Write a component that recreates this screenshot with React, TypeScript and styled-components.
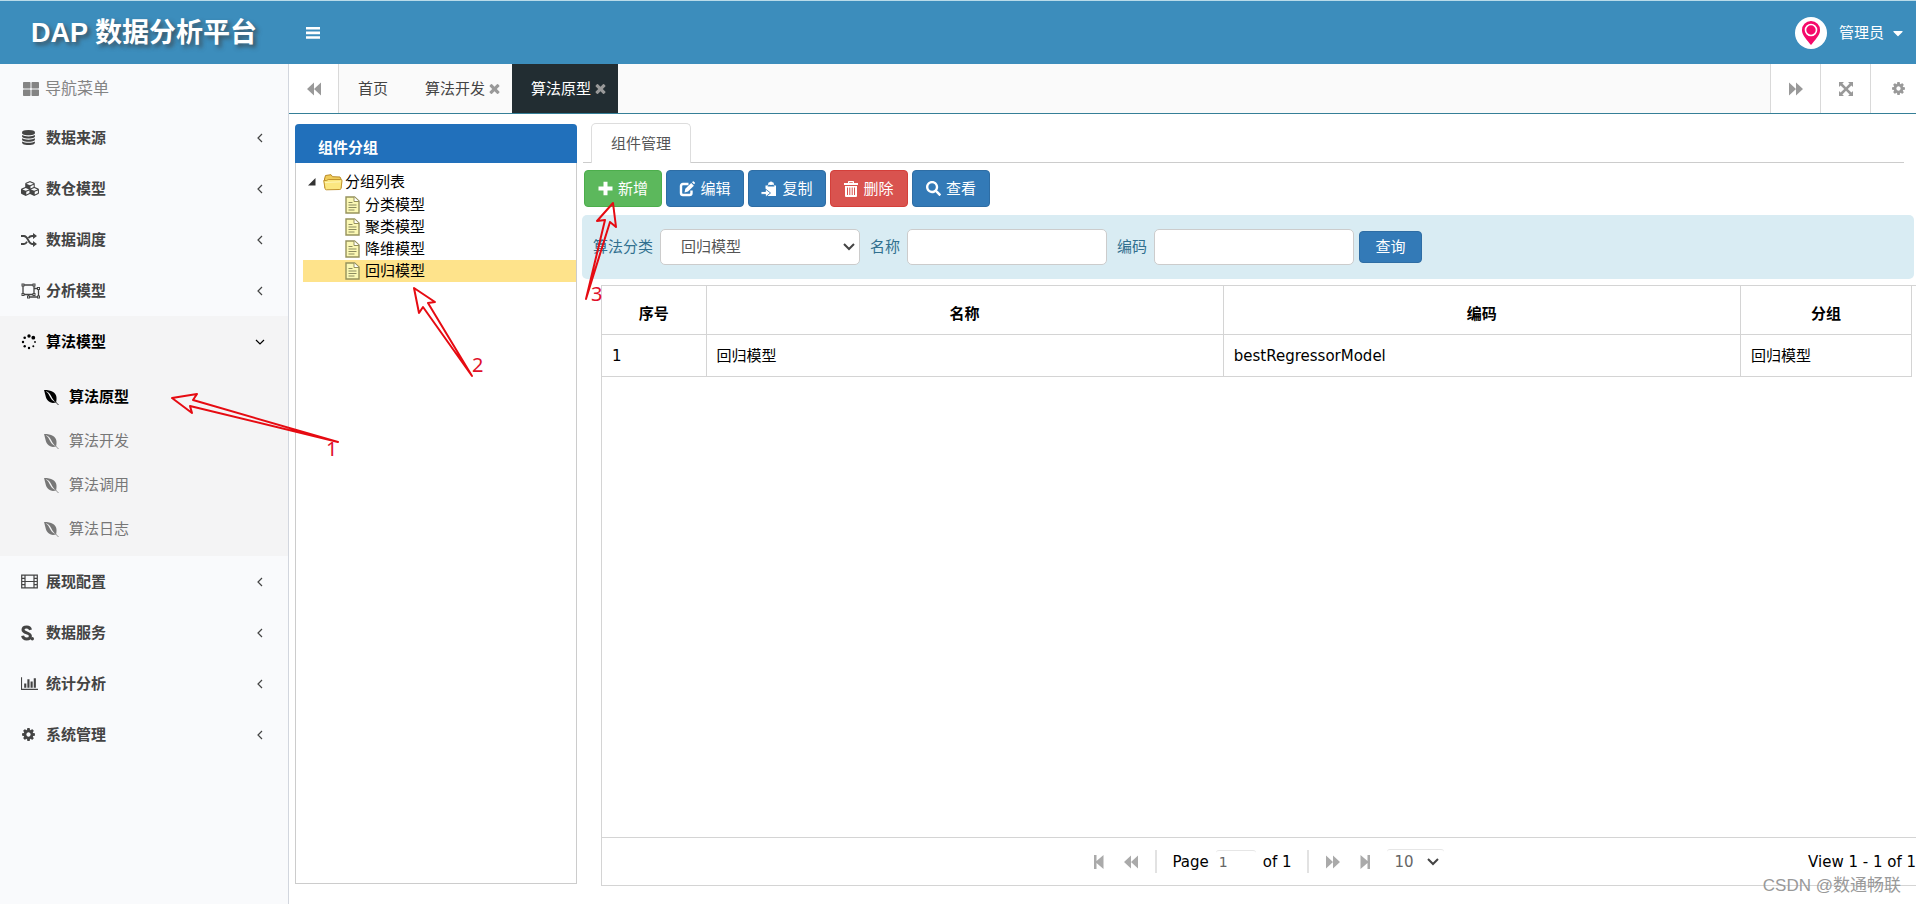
import React from "react";
import styled, { createGlobalStyle, css } from "styled-components";
import { FaThLarge, FaSearch, FaEnvira, FaCaretDown } from "react-icons/fa";

const GlobalStyle = createGlobalStyle`
  * { box-sizing: border-box; }
  body {
    margin: 0;
    background: #fff;
    font-family: "DejaVu Sans", "Noto Sans CJK SC", sans-serif;
    font-size: 15px;
    line-height: 20px;
    color: #000;
  }
  button, input, select { font: inherit; }
  a { color: inherit; text-decoration: none; }
  ul { list-style: none; margin: 0; padding: 0; }
`;

/* ---------- Icons ---------- */

const Svg = styled.svg<{ $w: number; $h?: number }>`
  display: block;
  flex: none;
  width: ${(p) => p.$w}px;
  height: ${(p) => p.$h ?? p.$w}px;
  fill: currentColor;
`;

const MenuIcon = () => (
  <Svg $w={14} $h={12} viewBox="0 0 14 12">
    <path d="M0 0h14v2.600H0zM0 4.600h14v2.600H0zM0 9.200h14v2.600H0z" />
  </Svg>
);

const DatabaseIcon = () => (
  <Svg $w={15} viewBox="0 0 1792 1792">
    <path d="M896 768q237 0 443-43t325-127v170q0 69-103 128t-280 93.500-385 34.500-385-34.500-280-93.500-103-128v-170q119 84 325 127t443 43zm0 768q237 0 443-43t325-127v170q0 69-103 128t-280 93.500-385 34.500-385-34.500-280-93.500-103-128v-170q119 84 325 127t443 43zm0-384q237 0 443-43t325-127v170q0 69-103 128t-280 93.500-385 34.500-385-34.500-280-93.500-103-128v-170q119 84 325 127t443 43zm0-1152q208 0 385 34.500t280 93.500 103 128v128q0 69-103 128t-280 93.500-385 34.500-385-34.500-280-93.500-103-128v-128q0-69 103-128t280-93.500 385-34.500z" />
  </Svg>
);

const CubesIcon = () => (
  <Svg $w={19} $h={15} viewBox="0 0 2304 1792">
    <path d="M640 1632l384-192v-314l-384 164v342zm-64-454l404-173-404-173-404 173zm1088 454l384-192v-314l-384 164v342zm-64-454l404-173-404-173-404 173zm-448-293l384-165v-266l-384 164v267zm-64-379l441-189-441-189-441 189zm1088 518v416q0 36-19 67t-52 47l-448 224q-25 14-57 14t-57-14l-448-224q-4-2-7-4-2 2-7 4l-448 224q-25 14-57 14t-57-14l-448-224q-33-16-52-47t-19-67v-416q0-38 21.500-70t56.500-48l434-186v-400q0-38 21.500-70t56.500-48l448-192q23-10 50-10t50 10l448 192q35 16 56.500 48t21.500 70v400l434 186q36 16 57 48t21 70z" />
  </Svg>
);

const ShuffleIcon = () => (
  <Svg $w={16} $h={14} viewBox="0 0 16 14">
    <path d="M0 3h3c4.500 0 4 8 8 8h1.500M0 11h3c1.500 0 2.300-1 3-2.400M7.500 5C8.300 3.800 9.300 3 11 3h1.500" fill="none" stroke="currentColor" strokeWidth="1.900" />
    <path d="M12 0l4 3-4 3zM12 8l4 3-4 3z" />
  </Svg>
);

const ObjectGroupIcon = () => (
  <Svg $w={19} $h={16} viewBox="0 0 19 16">
    <path d="M2 2h11v9.500H2zM13 5.500h4.500v8.500H7.500v-2.500" fill="none" stroke="currentColor" strokeWidth="1.300" />
    <path d="M.5.500h3v3h-3zM11.500.500h3v3h-3zM.5 10h3v3h-3zM11.500 10h3v3h-3zM16 4h3v3h-3zM16 12.500h3v3h-3zM6 12.500h3v3H6z" />
    <path d="M1.500 1.500h1v1h-1zM12.500 1.500h1v1h-1zM1.500 11h1v1h-1zM12.500 11h1v1h-1zM17 5h1v1h-1zM17 13.500h1v1h-1zM7 13.500h1v1H7z" fill="#f9fafc" />
  </Svg>
);

const SpinnerIcon = () => (
  <Svg $w={16} viewBox="0 0 16 16">
    <circle cx="8" cy="2" r="1.700" />
    <circle cx="12.300" cy="3.700" r="1.900" />
    <circle cx="14" cy="8" r="0.900" />
    <circle cx="12.300" cy="12.300" r="1" />
    <circle cx="8" cy="14" r="1.200" />
    <circle cx="3.700" cy="12.300" r="1.200" />
    <circle cx="2" cy="8" r="1.200" />
    <circle cx="3.700" cy="3.700" r="1.300" />
  </Svg>
);

const FilmIcon = () => (
  <Svg $w={17} $h={15} viewBox="0 0 17 15">
    <path d="M.7 1.200h15.600v12.600H.7zM4 1.200v12.600M13 1.200v12.600M4 7.500h9M.7 4.300H4M.7 7.500H4M.7 10.700H4M13 4.300h3.300M13 7.500h3.300M13 10.700h3.300" fill="none" stroke="currentColor" strokeWidth="1.200" />
  </Svg>
);

const ServiceIcon = () => (
  <Svg $w={14} $h={16} viewBox="0 0 14 16">
    <path d="M9.500 4.800C9 2.600 7.500 2 5.800 2 3.500 2 2 3.200 2 4.800c0 3.700 7.400 2.500 7.400 6.200 0 1.900-1.700 3-3.800 3-2.200 0-3.600-1-4-3.200" fill="none" stroke="currentColor" strokeWidth="3" />
    <circle cx="11.300" cy="13.800" r="1.700" />
  </Svg>
);

const BarsChartIcon = () => (
  <Svg $w={17} $h={15} viewBox="0 0 2048 1792">
    <path d="M640 896v512h-256v-512h256zm384-512v1024h-256v-1024h256zm1024 1152v128h-2048v-1536h128v1408h1920zm-640-896v768h-256v-768h256zm384-384v1152h-256v-1152h256z" />
  </Svg>
);

const GearIcon = () => (
  <Svg $w={15} viewBox="0 0 1792 1792">
    <path d="M1152 896q0-106-75-181t-181-75-181 75-75 181 75 181 181 75 181-75 75-181zm512-109v222q0 12-8 23t-20 13l-185 28q-19 54-39 91 35 50 107 138 10 12 10 25t-9 23q-27 37-99 108t-94 71q-12 0-26-9l-138-108q-44 23-91 38-16 136-29 186-7 28-36 28h-222q-14 0-24.500-8.500t-11.500-21.500l-28-184q-49-16-90-37l-141 107q-10 9-25 9-14 0-25-11-126-114-165-168-7-10-7-23 0-12 8-23 15-21 51-66.500t54-70.500q-27-50-41-99l-183-27q-13-2-21-12.500t-8-23.500v-222q0-12 8-23t19-13l186-28q14-46 39-92-40-57-107-138-10-12-10-24 0-10 9-23 26-36 98.500-107.500t94.500-71.500q13 0 26 10l138 107q44-23 91-38 16-136 29-186 7-28 36-28h222q14 0 24.500 8.500t11.500 21.500l28 184q49 16 90 37l142-107q9-9 24-9 13 0 25 10 129 119 165 170 7 8 7 22 0 12-8 23-15 21-51 66.500t-54 70.500q26 50 41 98l183 28q13 2 21 12.500t8 23.500z" />
  </Svg>
);

const CloseIcon = () => (
  <Svg $w={11} viewBox="240 240 1310 1310">
    <path d="M1490 1322q0 40-28 68l-136 136q-28 28-68 28t-68-28l-294-294-294 294q-28 28-68 28t-68-28l-136-136q-28-28-28-68t28-68l294-294-294-294q-28-28-28-68t28-68l136-136q28-28 68-28t68 28l294 294 294-294q28-28 68-28t68 28l136 136q28 28 28 68t-28 68l-294 294 294 294q28 28 28 68z" />
  </Svg>
);

const DoubleArrowIcon = ({ back }: { back?: boolean }) => (
  <Svg $w={14} viewBox="0 0 14 14">
    <path d={back ? "M7 .5v13L0 7zM14 .5v13L7 7z" : "M0 .5v13L7 7zM7 .5v13L14 7z"} />
  </Svg>
);

const EdgeArrowIcon = ({ back }: { back?: boolean }) => (
  <Svg $w={10} $h={14} viewBox="0 0 10 14">
    <path d={back ? "M0 0h2.500v6L9.500 0v14l-7-6v6H0z" : "M10 0H7.500v6L.5 0v14l7-6v6H10z"} />
  </Svg>
);

const ExpandIcon = () => (
  <Svg $w={14} viewBox="0 0 14 14">
    <path d="M0 0h5L3.400 1.600 7 5.200l3.600-3.600L9 0h5v5l-1.600-1.600L8.800 7l3.600 3.600L14 9v5H9l1.600-1.600L7 8.800l-3.600 3.600L5 14H0V9l1.600 1.600L5.200 7 1.600 3.400 0 5z" />
  </Svg>
);

const ChevronIcon = ({ down }: { down?: boolean }) => (
  <Svg $w={10} viewBox="0 0 10 10">
    <path d={down ? "M1 3l4 4 4-4" : "M7 1L3 5l4 4"} fill="none" stroke="currentColor" strokeWidth="1.200" />
  </Svg>
);

const PlusIcon = () => (
  <Svg $w={15} viewBox="0 0 15 15">
    <path d="M5.500.800h4v4.700H14.500v4H9.500v4.700h-4V9.500H.5v-4h5z" />
  </Svg>
);

const EditIcon = () => (
  <Svg $w={16} viewBox="0 0 16 16">
    <path d="M9.500 3H4Q2 3 2 5v7q0 2 2 2h6.500q2 0 2-2V9.500" fill="none" stroke="currentColor" strokeWidth="2.400" />
    <path d="M5.500 11.500l.8-3.700L12.200 2l2.700 2.700L9 10.600zM13 1.200l.8-.8q.5-.4 1 0l1 1q.4.500 0 1l-.8.800z" />
  </Svg>
);

const PasteIcon = () => (
  <Svg $w={16} viewBox="0 0 16 16">
    <path d="M4.500 4.500h2.300l.7-3h5l.7 3H15V15H4.500z" />
    <path d="M6.500 5.500h7l-1-1.800h-5z" fill="#337ab7" />
    <circle cx="10" cy="2.200" r="1.800" />
    <path d="M0 10.500h4.500V8l5 4-5 4v-2.600H0z" stroke="#337ab7" strokeWidth="0.900" />
  </Svg>
);

const TrashIcon = () => (
  <Svg $w={14} $h={16} viewBox="0 0 14 16">
    <path d="M0 2h4V.8Q4 0 4.800 0h4.400q.8 0 .8.800V2h4v2H0zM5.200 1.200V2h3.600v-.8zM1 5h12v10q0 1-1 1H2q-1 0-1-1zM3 6.500V14h1V6.500zM5.300 6.500V14h1V6.500zM7.700 6.500V14h1V6.500zM10 6.500V14h1V6.500z" fillRule="evenodd" />
  </Svg>
);

const FolderIcon = () => (
  <Svg $w={20} $h={17} viewBox="0 0 20 17">
    <path d="M1.500 5l1-3.500L8 .7l1.500 2L17 3l1 2v9H2z" fill="#f0cc5a" stroke="#b98a25" />
    <path d="M.7 6.500h3l1.500-1h12.600q1.300 0 1.200 1.300L18 14.500q-.2 1-1.200 1l-13.500.3q-1 0-1.200-1z" fill="#fbe780" stroke="#c1932c" />
    <path d="M2 8.500l15.500-.7" stroke="#fff6b8" />
  </Svg>
);

const DocIcon = () => (
  <Svg $w={15} $h={18} viewBox="0 0 15 18">
    <path d="M1 1h8.500L14 5v12H1z" fill="#fbf8b4" stroke="#96925c" strokeWidth="1.400" />
    <path d="M9 1v4.500h5" fill="#fff" stroke="#96925c" />
    <path d="M3.500 6.500h4M3.500 9h8M3.500 11.500h8M3.500 14h6" stroke="#8c8c60" strokeWidth="1.200" />
  </Svg>
);

const TreeToggleIcon = () => (
  <Svg $w={8} viewBox="0 0 8 8">
    <path d="M7.500 0v7.500H0z" fill="#333" />
  </Svg>
);

const PinIcon = () => (
  <Svg $w={20} $h={24} viewBox="0 0 20 24">
    <path d="M10 0a9 9 0 0 1 9 9.500C19 14 14 19 10 24 6 19 1 14 1 9.500A9 9 0 0 1 10 0z" fill="#f5096a" />
    <circle cx="10" cy="9" r="5.500" fill="none" stroke="#fff" strokeWidth="1.600" />
  </Svg>
);

/* ---------- Header ---------- */

const Header = styled.header`
  display: flex;
  align-items: center;
  height: 64px;
  padding: 0 10px 0 31px;
  background: #3c8dbc;
  border-top: 1px solid #b9dbe9;
  color: #fff;
`;

const Brand = styled.h1`
  width: 275px;
  margin: 0;
  font: bold 27px/32px "Liberation Sans", "Noto Sans CJK SC", sans-serif;
  text-shadow: 3px 3px 4px rgba(60, 60, 60, 0.7);
`;

const PlainButton = styled.button`
  display: flex;
  align-items: center;
  padding: 0;
  border: 0;
  background: none;
  color: inherit;
`;

const UserMenu = styled(PlainButton)`
  gap: 6px;
  margin-left: auto;
`;

const Avatar = styled.span`
  display: grid;
  place-items: center;
  width: 32px;
  height: 32px;
  margin-right: 6px;
  border-radius: 50%;
  background: #fff;
`;

/* ---------- Sidebar ---------- */

const Body = styled.div`
  flex: 1;
  display: flex;
`;

const Sidebar = styled.nav`
  flex: none;
  width: 289px;
  background: #f9fafc;
  border-right: 1px solid #d2d6de;
  color: #444;
`;

const SideTitle = styled.div`
  display: flex;
  align-items: center;
  gap: 6px;
  height: 48px;
  padding: 2px 0 0 23px;
  font-size: 16px;
  color: #848484;
`;

const SideLink = styled.a<{ $open?: boolean }>`
  display: flex;
  align-items: center;
  height: 51px;
  padding: 0 23px 0 21px;
  font-weight: bold;
  ${(p) => p.$open && css`background: #f4f4f5; color: #000;`}
`;

const SideIcon = styled.span`
  display: flex;
  width: 25px;
`;

const SideLabel = styled.span`
  flex: 1;
`;

const SubList = styled.ul`
  padding: 8px 0 5px;
  background: #f4f4f5;
`;

const SubLink = styled.a<{ $active?: boolean }>`
  display: flex;
  align-items: center;
  gap: 9px;
  height: 44px;
  padding-left: 43px;
  color: ${(p) => (p.$active ? "#000" : "#777")};
  font-weight: ${(p) => (p.$active ? "bold" : "normal")};
`;

/* ---------- Page tabs ---------- */

const Main = styled.main`
  flex: 1;
  min-width: 0;
  display: flex;
  flex-direction: column;
  overflow: hidden;
`;

const TabStrip = styled.div`
  display: flex;
  height: 50px;
  background: #fafafa;
  border-bottom: 1px solid #357f97;
`;

const StripButton = styled.button<{ $side: "left" | "right" }>`
  display: grid;
  place-items: center;
  flex: none;
  width: 50px;
  padding: 0;
  border: 0 solid #d9d9d9;
  border-${(p) => (p.$side === "left" ? "right" : "left")}-width: 1px;
  background: #fff;
  color: #999;
`;

const StripEnd = styled.div`
  display: flex;
  margin: 0 -4px 0 auto;
  ${StripButton}:last-child { padding-left: 6px; }
`;

const PageTab = styled.div<{ $active?: boolean; $fixed?: boolean }>`
  display: flex;
  align-items: center;
  gap: 4px;
  padding: 0 ${(p) => (p.$fixed ? 18 : 12)}px 0 19px;
  background: ${(p) => (p.$active ? "#222d32" : "transparent")};
  color: ${(p) => (p.$active ? "#fff" : "#444")};
`;

const TabClose = styled(PlainButton)`
  color: #999;
`;

/* ---------- Workspace ---------- */

const Workspace = styled.div`
  flex: 1;
  display: flex;
  gap: 5px;
  padding: 10px 0 20px 6px;
`;

const GroupPanel = styled.section`
  flex: none;
  width: 282px;
  border: 1px solid #ccc;
  border-top: 0;
  border-radius: 4px 4px 0 0;
`;

const GroupTitle = styled.h2`
  margin: 0 -1px;
  padding: 14px 23px 5px;
  border-radius: 4px 4px 0 0;
  background: #2170bb;
  color: #fff;
  font-size: 15px;
  line-height: 20px;
`;

const Tree = styled.ul`
  padding: 6px 0 0 7px;
`;

const TreeRow = styled.li<{ $child?: boolean; $selected?: boolean }>`
  display: flex;
  align-items: center;
  gap: ${(p) => (p.$child ? 5 : 2)}px;
  height: ${(p) => (p.$child ? 22 : 24)}px;
  margin-top: ${(p) => (p.$child ? 0 : 1)}px;
  padding-left: ${(p) => (p.$child ? 42 : 5)}px;
  background: ${(p) => (p.$selected ? "#fee38b" : "transparent")};
`;

const TreeToggle = styled(PlainButton)`
  width: 13px;
`;

const Content = styled.section`
  flex: 1;
  min-width: 0;
  display: flex;
  flex-direction: column;
`;

const ContentTabs = styled.div`
  display: flex;
  margin: 0 12px 0 1px;
  padding-left: 8px;
  border-bottom: 1px solid #ccc;
`;

const ContentTab = styled.button`
  height: 40px;
  margin: -1px 0 -1px;
  padding: 1px 19px 0;
  border: 1px solid #ddd;
  border-bottom: 0;
  border-radius: 5px 5px 0 0;
  background: #fff;
  color: #555;
`;

const Toolbar = styled.div`
  display: flex;
  gap: 4px;
  padding: 7px 2px 8px;
`;

const tones = {
  green: ["#5cb85c", "#4cae4c"],
  blue: ["#337ab7", "#2e6da4"],
  red: ["#d9534f", "#d43f3a"],
};

const ActionButton = styled.button<{ $tone: keyof typeof tones; $small?: boolean }>`
  display: flex;
  align-items: center;
  justify-content: center;
  gap: 5px;
  height: ${(p) => (p.$small ? 32 : 37)}px;
  width: ${(p) => (p.$small ? 63 : 78)}px;
  padding: 0;
  border: 1px solid ${(p) => tones[p.$tone][1]};
  border-radius: 4px;
  background: ${(p) => tones[p.$tone][0]};
  color: #fff;
`;

const FilterBar = styled.form`
  display: flex;
  align-items: center;
  height: 64px;
  margin-right: 2px;
  padding-left: 11px;
  border-radius: 5px;
  background: #d9ecf3;
  color: #31708f;
`;

const Field = styled.label`
  display: flex;
  align-items: center;
  gap: 7px;
  margin-right: 10px;
  &:last-of-type { margin-right: 5px; }
`;

const SelectBox = styled.span`
  position: relative;
  color: #444;
`;

const boxStyle = css`
  display: block;
  width: 200px;
  height: 36px;
  border: 1px solid #ccc;
  border-radius: 5px;
  background: #fff;
  color: #555;
`;

const Select = styled.select`
  ${boxStyle}
  appearance: none;
  padding: 0 20px;
`;

const TextBox = styled.input`
  ${boxStyle}
  padding: 0 12px;
`;

const SelectArrow = styled.svg`
  position: absolute;
  top: 50%;
  right: 5px;
  width: 12px;
  height: 8px;
  margin-top: -4px;
  fill: none;
  stroke: currentColor;
  stroke-width: 2;
  pointer-events: none;
`;

/* ---------- Grid ---------- */

const Grid = styled.div`
  flex: 1;
  display: flex;
  flex-direction: column;
  margin: 6px 0 -2px 19px;
  border: 1px solid #d4d4d4;
  border-right: 0;
`;

const Table = styled.table`
  width: calc(100% - 4px);
  table-layout: fixed;
  border-collapse: collapse;
  th, td {
    border: 1px solid #d4d4d4;
    border-width: 0 1px 1px 0;
    padding: 2px 10px 0;
  }
  th { height: 48px; padding-top: 8px; }
  td { height: 42px; }
`;

const IndexCol = styled.col`
  width: 104px;
`;

const GroupCol = styled.col`
  width: 171px;
`;

const Pager = styled.div`
  display: grid;
  grid-template-columns: 1fr auto 1fr;
  align-items: center;
  height: 48px;
  margin-top: auto;
  padding-left: 10px;
  border-top: 1px solid #d4d4d4;
`;

const PagerControls = styled.div`
  grid-column: 2;
  display: flex;
  align-items: center;
  color: #aaa;
`;

const PagerButton = styled(PlainButton)`
  margin: 0 10px;
`;

const PagerSeparator = styled.span`
  width: 2px;
  height: 23px;
  margin: 0 7px;
  background: #e2e2e2;
`;

const PagerText = styled.label`
  display: flex;
  align-items: center;
  gap: 7px;
  margin: 0 8px;
  color: #000;
`;

const PageInput = styled.input`
  width: 40px;
  height: 24px;
  padding: 0 3px;
  border: 0;
  border-top: 1px solid #e6e6e6;
  border-radius: 3px;
  font-size: 14px;
  color: #666;
`;

const PageSizeBox = styled(SelectBox)`
  margin-left: 7px;
`;

const PageSize = styled.select`
  display: block;
  appearance: none;
  width: 57px;
  height: 26px;
  padding: 0 8px;
  border: 0;
  border-top: 1px solid #e6e6e6;
  border-radius: 3px;
  background: #fff;
  color: #666;
`;

const PagerInfo = styled.div`
  grid-column: 3;
  text-align: right;
  white-space: nowrap;
`;

/* ---------- Overlays ---------- */

const Shell = styled.div`
  position: relative;
  display: flex;
  flex-direction: column;
  min-height: 100vh;
  overflow: hidden;
`;

const Annotations = styled.svg`
  position: absolute;
  top: 0;
  left: 0;
  width: 640px;
  height: 480px;
  fill: none;
  stroke: #e60b12;
  stroke-width: 2;
  stroke-linejoin: round;
  pointer-events: none;
  text {
    fill: #e0102a;
    stroke: none;
    font: 20px "Noto Sans", sans-serif;
  }
`;

const Watermark = styled.div`
  position: absolute;
  right: 15px;
  bottom: 6px;
  font: 17px/24px "Liberation Sans", "Noto Sans CJK SC", sans-serif;
  color: #999;
`;

const menus = [
  { label: "数据来源", icon: <DatabaseIcon /> },
  { label: "数仓模型", icon: <CubesIcon /> },
  { label: "数据调度", icon: <ShuffleIcon /> },
  { label: "分析模型", icon: <ObjectGroupIcon /> },
  { label: "算法模型", icon: <SpinnerIcon />, children: ["算法原型", "算法开发", "算法调用", "算法日志"] },
  { label: "展现配置", icon: <FilmIcon /> },
  { label: "数据服务", icon: <ServiceIcon /> },
  { label: "统计分析", icon: <BarsChartIcon /> },
  { label: "系统管理", icon: <GearIcon /> },
];

const groups = ["分类模型", "聚类模型", "降维模型", "回归模型"];

export default function App() {
  return (
    <Shell>
      <GlobalStyle />
      <Header>
        <Brand>DAP 数据分析平台</Brand>
        <PlainButton aria-label="切换菜单"><MenuIcon /></PlainButton>
        <UserMenu>
          <Avatar><PinIcon /></Avatar>
          管理员
          <FaCaretDown size={16} />
        </UserMenu>
      </Header>
      <Body>
        <Sidebar>
          <SideTitle><FaThLarge size={16} />导航菜单</SideTitle>
          <ul>
            {menus.map((m) => (
              <li key={m.label}>
                <SideLink href="#" $open={!!m.children}>
                  <SideIcon>{m.icon}</SideIcon>
                  <SideLabel>{m.label}</SideLabel>
                  <ChevronIcon down={!!m.children} />
                </SideLink>
                {m.children && (
                  <SubList>
                    {m.children.map((c, i) => (
                      <li key={c}>
                        <SubLink href="#" $active={i === 0}><FaEnvira size={17} />{c}</SubLink>
                      </li>
                    ))}
                  </SubList>
                )}
              </li>
            ))}
          </ul>
        </Sidebar>
        <Main>
          <TabStrip>
            <StripButton $side="left" aria-label="向左"><DoubleArrowIcon back /></StripButton>
            <PageTab $fixed>首页</PageTab>
            <PageTab>算法开发<TabClose aria-label="关闭"><CloseIcon /></TabClose></PageTab>
            <PageTab $active>算法原型<TabClose aria-label="关闭"><CloseIcon /></TabClose></PageTab>
            <StripEnd>
              <StripButton $side="right" aria-label="向右"><DoubleArrowIcon /></StripButton>
              <StripButton $side="right" aria-label="全屏"><ExpandIcon /></StripButton>
              <StripButton $side="right" aria-label="设置"><GearIcon /></StripButton>
            </StripEnd>
          </TabStrip>
          <Workspace>
            <GroupPanel>
              <GroupTitle>组件分组</GroupTitle>
              <Tree>
                <TreeRow>
                  <TreeToggle aria-label="折叠"><TreeToggleIcon /></TreeToggle>
                  <FolderIcon />
                  分组列表
                </TreeRow>
                {groups.map((g) => (
                  <TreeRow key={g} $child $selected={g === "回归模型"}><DocIcon />{g}</TreeRow>
                ))}
              </Tree>
            </GroupPanel>
            <Content>
              <ContentTabs><ContentTab>组件管理</ContentTab></ContentTabs>
              <Toolbar>
                <ActionButton $tone="green"><PlusIcon />新增</ActionButton>
                <ActionButton $tone="blue"><EditIcon />编辑</ActionButton>
                <ActionButton $tone="blue"><PasteIcon />复制</ActionButton>
                <ActionButton $tone="red"><TrashIcon />删除</ActionButton>
                <ActionButton $tone="blue"><FaSearch size={15} />查看</ActionButton>
              </Toolbar>
              <FilterBar>
                <Field>
                  算法分类
                  <SelectBox>
                    <Select defaultValue="回归模型">
                      {groups.map((g) => <option key={g}>{g}</option>)}
                    </Select>
                    <SelectArrow viewBox="0 0 12 8"><path d="M1 1l5 5 5-5" /></SelectArrow>
                  </SelectBox>
                </Field>
                <Field>名称<TextBox type="text" /></Field>
                <Field>编码<TextBox type="text" /></Field>
                <ActionButton type="button" $tone="blue" $small>查询</ActionButton>
              </FilterBar>
              <Grid>
                <Table>
                  <colgroup><IndexCol /><col /><col /><GroupCol /></colgroup>
                  <thead>
                    <tr><th>序号</th><th>名称</th><th>编码</th><th>分组</th></tr>
                  </thead>
                  <tbody>
                    <tr><td>1</td><td>回归模型</td><td>bestRegressorModel</td><td>回归模型</td></tr>
                  </tbody>
                </Table>
                <Pager>
                  <PagerControls>
                    <PagerButton aria-label="首页"><EdgeArrowIcon back /></PagerButton>
                    <PagerButton aria-label="上一页"><DoubleArrowIcon back /></PagerButton>
                    <PagerSeparator />
                    <PagerText>Page <PageInput defaultValue="1" /> of 1</PagerText>
                    <PagerSeparator />
                    <PagerButton aria-label="下一页"><DoubleArrowIcon /></PagerButton>
                    <PagerButton aria-label="末页"><EdgeArrowIcon /></PagerButton>
                    <PageSizeBox>
                      <PageSize aria-label="每页条数" defaultValue="10">
                        <option>10</option>
                        <option>20</option>
                      </PageSize>
                      <SelectArrow viewBox="0 0 12 8"><path d="M1 1l5 5 5-5" /></SelectArrow>
                    </PageSizeBox>
                  </PagerControls>
                  <PagerInfo>View 1 - 1 of 1</PagerInfo>
                </Pager>
              </Grid>
            </Content>
          </Workspace>
        </Main>
      </Body>
      <Annotations viewBox="0 0 640 480">
        <path d="M172 398L197 394L193 400L338 442L190 406L192 413Z" />
        <path d="M414 288L435 302L428 303L472 376L423 307L419 313Z" />
        <path d="M613 203L616 227L610 222L586 299L605 220L597 221Z" />
        <text x="326" y="456">1</text>
        <text x="472" y="372">2</text>
        <text x="591" y="301">3</text>
      </Annotations>
      <Watermark>CSDN @数通畅联</Watermark>
    </Shell>
  );
}
